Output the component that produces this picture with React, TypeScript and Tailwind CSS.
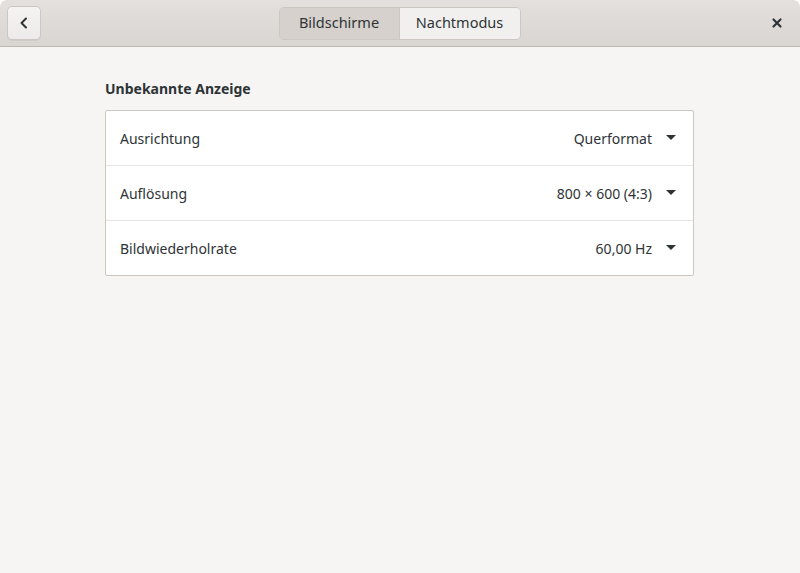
import React, { useState } from 'react';

const rows = [
    { label: 'Ausrichtung', value: 'Querformat' },
    { label: 'Auflösung', value: '800 × 600 (4:3)' },
    { label: 'Bildwiederholrate', value: '60,00 Hz' },
];

const Caret: React.FC = () => (
    <svg width="10" height="6" viewBox="0 0 10 6" className="ml-[14px] mr-[17px]">
        <path d="M0 0 L10 0 L5 5 Z" fill="#2e3436" />
    </svg>
);

const App: React.FC = () => {
    const [tab, setTab] = useState('displays');

    return (
        <div className="w-[800px] h-[573px] flex flex-col bg-[#f6f5f4] text-[#2e3436] rounded-t-[7px] overflow-hidden" style={{ fontFamily: '"Noto Sans", "Open Sans", sans-serif' }}>
            {/* Header bar */}
            <div className="h-[47px] shrink-0 flex items-center px-[7px] bg-gradient-to-b from-[#e3e0dd] to-[#d9d5d1] border-b border-[#bfb8b1]">
                <button className="w-[34px] h-[34px] flex items-center justify-center rounded-[5px] border border-[#cdc7c2] bg-gradient-to-b from-[#f4f3f1] to-[#edebe9] shadow-[0_1px_0_rgba(0,0,0,0.05)]">
                    <svg width="16" height="16" viewBox="0 0 16 16">
                        <path d="M10 3.5 L5.5 8 L10 12.5" stroke="#2e3436" strokeWidth="2" fill="none" strokeLinecap="round" strokeLinejoin="round" />
                    </svg>
                </button>
                <div className="flex-1 flex justify-center">
                    <div className="flex h-[33px] rounded-[5px] border border-[#cdc7c2] overflow-hidden text-[14.5px] ml-[-2px]">
                        <button
                            onClick={() => setTab('displays')}
                            className={`w-[120px] flex items-center justify-center ${tab === 'displays' ? 'bg-[#d6d1cd]' : 'bg-[#f1f0ee]'} border-r border-[#cdc7c2]`}
                        >
                            Bildschirme
                        </button>
                        <button
                            onClick={() => setTab('night')}
                            className={`w-[120px] flex items-center justify-center ${tab === 'night' ? 'bg-[#d6d1cd]' : 'bg-[#f1f0ee]'}`}
                        >
                            Nachtmodus
                        </button>
                    </div>
                </div>
                <button className="w-[34px] h-[34px] flex items-center justify-center mr-[-1px]">
                    <svg width="16" height="16" viewBox="0 0 16 16">
                        <path d="M4.5 4.5 L11.5 11.5 M11.5 4.5 L4.5 11.5" stroke="#2e3436" strokeWidth="2.2" strokeLinecap="round" />
                    </svg>
                </button>
            </div>

            {/* Content */}
            <div className="flex-1 pt-[32px] px-[105px] pr-[106px]">
                <h2 className="text-[14px] font-bold leading-[20px] mb-[11px]">Unbekannte Anzeige</h2>
                <div className="bg-white border border-[#cdc7c2] rounded-[2px]">
                    {rows.map((row, i) => (
                        <div key={row.label} className={`flex items-center pl-[14px] text-[14px] ${i > 0 ? 'h-[55px] border-t border-[#e6e3e0]' : 'h-[54px]'}`}>
                            <span className="flex-1">{row.label}</span>
                            <span>{row.value}</span>
                            <Caret />
                        </div>
                    ))}
                </div>
            </div>
        </div>
    );
};

export default App;
